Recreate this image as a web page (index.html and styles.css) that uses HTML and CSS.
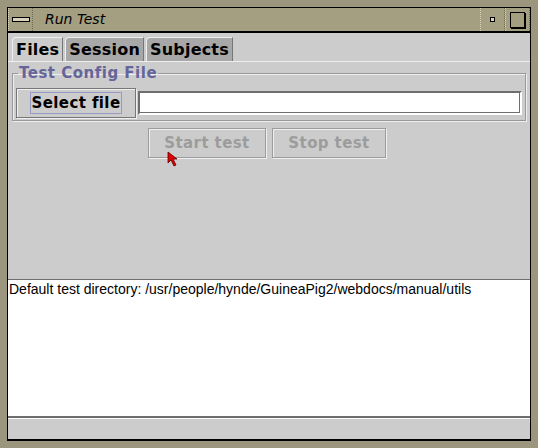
FILE: index.html
```html
<!DOCTYPE html>
<html lang="en">
<head>
  <meta charset="UTF-8">
  <title>Run Test</title>
  <link rel="stylesheet" href="styles.css">
</head>
<body>
  <div class="frame">
    <div class="titlebar">
      <div class="tb-btn tb-menu"><span class="dash"></span></div>
      <div class="tb-title">Run Test</div>
      <div class="tb-btn tb-min"><span class="dot"></span></div>
      <div class="tb-btn tb-max"><span class="square"></span></div>
    </div>
    <div class="client">
      <div class="tabs">
        <div class="tab active">Files</div>
        <div class="tab">Session</div>
        <div class="tab">Subjects</div>
      </div>
      <div class="panel">
        <fieldset class="group">
          <legend>Test Config File</legend>
          <div class="row">
            <button class="btn select"><span class="focus">Select file</span></button>
            <input class="field" type="text">
          </div>
        </fieldset>
        <div class="actions">
          <button class="btn disabled start">Start test</button>
          <button class="btn disabled stop">Stop test</button>
        </div>
      </div>
      <div class="log">Default test directory: /usr/people/hynde/GuineaPig2/webdocs/manual/utils</div>
      <div class="status"></div>
    </div>
    <svg class="cursor" width="12" height="16" viewBox="0 0 12 16">
      <path d="M1 1 L1 12 L4 9 L7 15 L9 14 L6 8 L10 8 Z" fill="#e00000" stroke="#600000" stroke-width="0.8"/>
    </svg>
  </div>
</body>
</html>
```

FILE: styles.css
```css
html, body {
  margin: 0;
  padding: 0;
  background: #ffffff;
}
.frame {
  position: relative;
  width: 524px;
  height: 434px;
  padding: 7px;
  background: #aaa48b;
  border-right: 1px solid #6e6a55;
  border-bottom: 1px solid #6e6a55;
  display: flex;
  flex-direction: column;
  background-image: radial-gradient(#8c8670 0.6px, transparent 0.8px);
  background-size: 2px 2px;
}
.titlebar {
  height: 23px;
  display: flex;
  background: #a59f82;
  border: 1px solid #000;
  border-bottom: 2px solid #000;
  box-sizing: content-box;
}
.tb-btn {
  width: 23px;
  display: flex;
  align-items: center;
  justify-content: center;
  border-right: 1px dotted #6e6a55;
  border-left: 1px dotted #d8d3bf;
}
.tb-menu .dash {
  width: 16px;
  height: 3px;
  border: 1px solid #000;
  background: #d8d3bf;
}
.tb-title {
  flex: 1;
  padding-left: 12px;
  font-family: "DejaVu Sans", sans-serif;
  font-style: italic;
  font-size: 14px;
  line-height: 23px;
  color: #000;
}
.tb-min .dot {
  width: 3px;
  height: 3px;
  border: 1px solid #000;
  background: #d8d3bf;
}
.tb-max .square {
  width: 13px;
  height: 14px;
  border: 1px solid #000;
  box-shadow: 1px 1px 0 #000;
  background: #a59f82;
}
.client {
  flex: 1;
  display: flex;
  flex-direction: column;
  background: #cccccc;
  border-left: 1px solid #000;
  border-right: 1px solid #000;
}
.tabs {
  display: flex;
  gap: 2px;
  padding: 4px 0 0 4px;
  height: 24px;
}
.tab {
  font-family: "DejaVu Sans", sans-serif;
  font-weight: bold;
  font-size: 16px;
  letter-spacing: 0.2px;
  line-height: 23px;
  padding: 0 3px;
  background: #a8a8a8;
  border-top: 1px solid #eeeeee;
  border-left: 1px solid #eeeeee;
  border-right: 1px solid #777;
  border-radius: 4px 0 0 0;
  color: #000;
}
.tab.active {
  background: #cccccc;
}
.panel {
  height: 212px;
  border-top: 1px solid #eeeeee;
  padding: 5px 4px 0 4px;
  display: flex;
  flex-direction: column;
}
.group {
  margin: 0;
  padding: 0 2px 2px 3px;
  border: 1px solid #999;
  box-shadow: inset 1px 1px 0 #eee, 1px 1px 0 #eee;
}
.group legend {
  padding: 0 1px;
  margin-left: 2px;
  font-family: "DejaVu Sans", sans-serif;
  font-weight: bold;
  font-size: 15px;
  letter-spacing: 0.5px;
  line-height: 13px;
  color: #65659a;
}
.row {
  display: flex;
  align-items: center;
  gap: 2px;
  margin-top: 8px;
}
.btn {
  font-family: "DejaVu Sans", sans-serif;
  font-weight: bold;
  font-size: 15px;
  letter-spacing: 0.4px;
  background: #cccccc;
  border: 1px solid #777;
  box-shadow: inset 1px 1px 0 #f0f0f0, 1px 1px 0 #f0f0f0;
  padding: 0;
  color: #000;
}
.select {
  width: 120px;
  height: 30px;
  display: flex;
  align-items: center;
  justify-content: center;
}
.select .focus {
  border: 1px solid #9a9ac8;
  padding: 0 1px;
  line-height: 20px;
}
.field {
  flex: 1;
  height: 24px;
  margin-right: 1px;
  box-sizing: border-box;
  background: #fff;
  border: 2px solid #6e6e6e;
  border-right-color: #fff;
  border-bottom-color: #fff;
  box-shadow: inset -1px -1px 0 #6e6e6e;
}
.actions {
  display: flex;
  justify-content: center;
  gap: 6px;
  margin-top: 7px;
  padding-right: 4px;
}
.btn.disabled {
  color: #9c9c9c;
  height: 30px;
  border-color: #9c9c9c;
}
.start {
  width: 118px;
}
.stop {
  width: 114px;
}
.log {
  height: 134px;
  background: #fff;
  border-top: 1px solid #6e6e6e;
  border-bottom: 2px solid #6e6e6e;
  padding: 1px 1px;
  font-family: "Liberation Sans", Arial, sans-serif;
  font-size: 14px;
  line-height: 16px;
  color: #000;
}
.status {
  flex: 1;
  background: #cccccc;
  border-top: 1px solid #fff;
  border-bottom: 2px solid #000;
}
.cursor {
  position: absolute;
  left: 167px;
  top: 151px;
}
```
